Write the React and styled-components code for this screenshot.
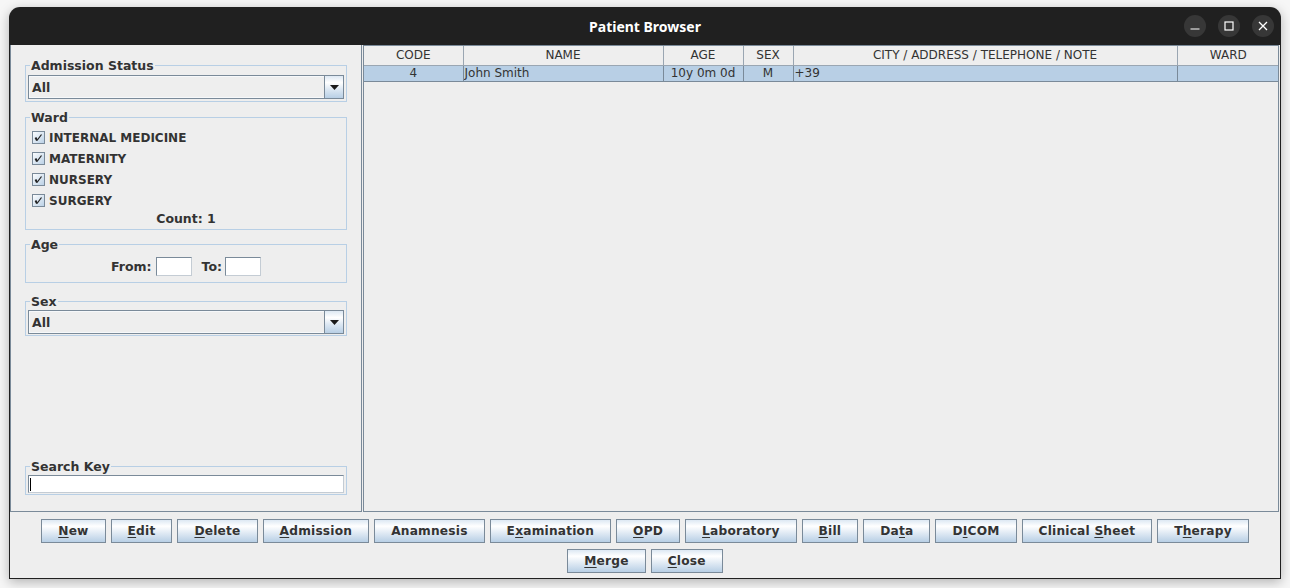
import React from 'react';
import styled, { createGlobalStyle } from 'styled-components';

const GlobalStyle = createGlobalStyle`
  html, body {
    margin: 0;
    padding: 0;
    background: #f6f6f6;
  }
  body {
    width: 1290px;
    height: 588px;
    overflow: hidden;
    font-family: "DejaVu Sans", "Liberation Sans", sans-serif;
    color: #333333;
  }
`;

const Screen = styled.div`
  padding: 7px 9px 0 9px;
`;

const Window = styled.div`
  width: 1272px;
  height: 572px;
  box-sizing: border-box;
  border-radius: 11px 11px 0 0;
  background: #202020;
  box-shadow: 0 3px 12px rgba(0, 0, 0, 0.28);
  display: flex;
  flex-direction: column;
  overflow: hidden;
`;

const TitleBar = styled.div`
  height: 38px;
  flex: none;
  display: grid;
  grid-template-columns: 1fr auto 1fr;
  align-items: center;
`;

const Title = styled.div`
  grid-column: 2;
  font-family: "Noto Sans", "DejaVu Sans", sans-serif;
  font-weight: 700;
  font-size: 14px;
  color: #ffffff;
  padding-top: 1px;
`;

const Controls = styled.div`
  grid-column: 3;
  justify-self: end;
  display: flex;
  gap: 12px;
  padding-right: 7px;
`;

const CircleButton = styled.div`
  width: 22px;
  height: 22px;
  border-radius: 50%;
  background: #373737;
  display: flex;
  align-items: center;
  justify-content: center;
`;

const Body = styled.div`
  flex: 1;
  margin: 0 1px 1px 1px;
  background: #eeeeee;
  display: flex;
  flex-direction: column;
  min-height: 0;
`;

const Split = styled.div`
  height: 467px;
  flex: none;
  display: flex;
  gap: 1px;
  padding-right: 1px;
`;

const LeftPanel = styled.div`
  width: 352px;
  box-sizing: border-box;
  border: 1px solid #7a8a99;
  border-top: none;
  padding: 13px 14px 16px 14px;
  display: flex;
  flex-direction: column;
`;

const Group = styled.fieldset`
  margin: ${({ $gap }) => $gap || 0}px 0 0 0;
  border: 1px solid #b8cfe5;
  padding: ${({ $pad }) => $pad || '2px 2px 2px 2px'};
  min-width: 0;
  ${({ $bottom }) => $bottom && 'margin-top: auto;'}
`;

const Legend = styled.legend`
  padding: 0 1px;
  margin-left: 2px;
  font-weight: 700;
  font-size: 12.5px;
  line-height: 15px;
  color: #333333;
`;

const Combo = styled.div`
  height: 24px;
  box-sizing: border-box;
  border: 1px solid #7a8a99;
  background: #eeeeee;
  display: flex;
  align-items: stretch;
`;

const ComboText = styled.div`
  flex: 1;
  padding-left: 2px;
  font-weight: 700;
  font-size: 12.5px;
  line-height: 22px;
  border: 1px solid #f6f8fa;
  border-right: none;
`;

const ComboArrow = styled.div`
  width: 18px;
  border-left: 1px solid #7a8a99;
  background: linear-gradient(to bottom, #dde8f3 0%, #ffffff 30%, #dde8f3 60%, #b8cfe5 100%);
  display: flex;
  align-items: center;
  justify-content: center;
  padding-top: 1px;
`;

const CheckRow = styled.div`
  height: 21px;
  display: flex;
  align-items: center;
  padding-left: 4px;
  gap: 4px;
  font-weight: 700;
  font-size: 12px;
`;

const CountLine = styled.div`
  height: 15px;
  line-height: 15px;
  text-align: center;
  font-weight: 700;
  font-size: 12.5px;
  margin-bottom: 1px;
`;

const AgeRow = styled.div`
  display: flex;
  justify-content: center;
  align-items: center;
  padding: 5px 0 6px 0;
  font-weight: 700;
  font-size: 12.5px;
`;

const AgeLabel = styled.span`
  margin: 0 ${({ $trail }) => $trail || 4}px 0 ${({ $lead }) => $lead || 0}px;
`;

const TextBox = styled.div`
  width: ${({ $w }) => ($w ? `${$w}px` : 'auto')};
  height: ${({ $h }) => $h || 19}px;
  box-sizing: border-box;
  background: #ffffff;
  border: 1px solid #7a8a99;
  border-right-color: #c4ccd4;
  border-bottom-color: #c4ccd4;
  position: relative;
`;

const Caret = styled.div`
  position: absolute;
  left: 1px;
  top: 2px;
  width: 1px;
  height: 13px;
  background: #000000;
`;

const TablePane = styled.div`
  flex: 1;
  box-sizing: border-box;
  border: 1px solid #7a8a99;
  background: #eeeeee;
  overflow: hidden;
`;

const Table = styled.table`
  width: 915px;
  table-layout: fixed;
  border-collapse: collapse;
  font-size: 12px;
  color: #333333;
`;

const HeadCell = styled.th`
  height: 19px;
  padding: 0;
  font-weight: 400;
  text-align: center;
  background: #eeeeee;
  border-right: 1px solid #9aa6b2;
  border-left: 1px solid #ffffff;
  border-bottom: 1px solid #9aa6b2;
  line-height: 19px;
  &:first-child { border-left: none; }
  &:last-child { border-right: none; }
`;

const Cell = styled.td`
  height: 15px;
  padding: 0 1px;
  line-height: 15px;
  background: #b8cfe5;
  text-align: ${({ $align }) => $align || 'left'};
  border-right: 1px solid #7a8a99;
  border-bottom: 1px solid #7a8a99;
  white-space: nowrap;
  overflow: hidden;
  &:last-child { border-right: none; }
`;

const ButtonBar = styled.div`
  flex: 1;
  display: flex;
  flex-direction: column;
  align-items: center;
  gap: 6px;
  padding-top: 7px;
`;

const ButtonRow = styled.div`
  display: flex;
  gap: 5px;
  justify-content: center;
`;

const Button = styled.button`
  height: 24px;
  padding: 0 16px;
  margin: 0;
  border: 1px solid #7a8a99;
  background: linear-gradient(to bottom, #dde8f3 0%, #ffffff 28%, #dde8f3 62%, #b8cfe5 100%);
  font-family: "DejaVu Sans", sans-serif;
  font-weight: 700;
  font-size: 12.2px;
  color: #333333;
  letter-spacing: 0.2px;
  cursor: pointer;
  & u {
    text-underline-offset: 2px;
  }
`;

const CheckIcon = () => (
  <svg width="13" height="13" viewBox="0 0 13 13">
    <defs>
      <linearGradient id="cbg" x1="0" y1="0" x2="1" y2="1">
        <stop offset="0" stopColor="#ffffff" />
        <stop offset="1" stopColor="#b8cfe5" />
      </linearGradient>
    </defs>
    <rect x="0.5" y="0.5" width="12" height="12" fill="url(#cbg)" stroke="#7a8a99" />
    <path d="M3.5 6.5 L5 9.5" stroke="#222222" strokeWidth="2" fill="none" />
    <path d="M5 9.5 L9.5 3.5" stroke="#222222" strokeWidth="1.2" fill="none" />
  </svg>
);

const DownArrow = () => (
  <svg width="9" height="5" viewBox="0 0 9 5">
    <path d="M0 0 H9 L4.5 5 Z" fill="#1a1a1a" />
  </svg>
);

const ComboBox = ({ value }) => (
  <Combo>
    <ComboText>{value}</ComboText>
    <ComboArrow><DownArrow /></ComboArrow>
  </Combo>
);

const label = (text, idx) =>
  idx == null ? text : (
    <>
      {text.slice(0, idx)}
      <u>{text[idx]}</u>
      {text.slice(idx + 1)}
    </>
  );

const row1 = [
  ['New', 0], ['Edit', 0], ['Delete', 0], ['Admission', 0], ['Anamnesis', null],
  ['Examination', 1], ['OPD', 0], ['Laboratory', 0], ['Bill', 0], ['Data', 2],
  ['DICOM', 1], ['Clinical Sheet', 9], ['Therapy', 1],
];
const row2 = [['Merge', 0], ['Close', 0]];

const wards = ['INTERNAL MEDICINE', 'MATERNITY', 'NURSERY', 'SURGERY'];

const columns = [
  ['CODE', 99], ['NAME', 200], ['AGE', 80], ['SEX', 50],
  ['CITY / ADDRESS / TELEPHONE / NOTE', 384], ['WARD', 102],
];

export default function App() {
  return (
    <Screen>
      <GlobalStyle />
      <Window>
        <TitleBar>
          <Title>Patient Browser</Title>
          <Controls>
            <CircleButton>
              <svg width="10" height="10" viewBox="0 0 10 10">
                <path d="M0.5 8 H9.5" stroke="#fff" strokeWidth="1.2" />
              </svg>
            </CircleButton>
            <CircleButton>
              <svg width="10" height="10" viewBox="0 0 10 10">
                <rect x="1" y="1" width="8" height="8" fill="none" stroke="#fff" strokeWidth="1.2" />
              </svg>
            </CircleButton>
            <CircleButton>
              <svg width="10" height="10" viewBox="0 0 10 10">
                <path d="M1 1 L9 9 M9 1 L1 9" stroke="#fff" strokeWidth="1.3" />
              </svg>
            </CircleButton>
          </Controls>
        </TitleBar>
        <Body>
          <Split>
            <LeftPanel>
              <Group>
                <Legend>Admission Status</Legend>
                <ComboBox value="All" />
              </Group>
              <Group $gap={8} $pad="2px 2px 2px 2px">
                <Legend>Ward</Legend>
                {wards.map((w) => (
                  <CheckRow key={w}>
                    <CheckIcon />
                    <span>{w}</span>
                  </CheckRow>
                ))}
                <CountLine>Count: 1</CountLine>
              </Group>
              <Group $gap={7} $pad="0 2px">
                <Legend>Age</Legend>
                <AgeRow>
                  <AgeLabel>From:</AgeLabel>
                  <TextBox $w={36} />
                  <AgeLabel $lead={10} $trail={3}>To:</AgeLabel>
                  <TextBox $w={36} />
                </AgeRow>
              </Group>
              <Group $gap={11} $pad="1px 2px">
                <Legend>Sex</Legend>
                <ComboBox value="All" />
              </Group>
              <Group $bottom $pad="1px 2px">
                <Legend>Search Key</Legend>
                <TextBox $h={18}>
                  <Caret />
                </TextBox>
              </Group>
            </LeftPanel>
            <TablePane>
              <Table>
                <colgroup>
                  {columns.map(([name, w]) => (
                    <col key={name} style={{ width: w }} />
                  ))}
                </colgroup>
                <thead>
                  <tr>
                    {columns.map(([name]) => (
                      <HeadCell key={name}>{name}</HeadCell>
                    ))}
                  </tr>
                </thead>
                <tbody>
                  <tr>
                    <Cell $align="center">4</Cell>
                    <Cell>John Smith</Cell>
                    <Cell $align="center">10y 0m 0d</Cell>
                    <Cell $align="center">M</Cell>
                    <Cell>+39</Cell>
                    <Cell></Cell>
                  </tr>
                </tbody>
              </Table>
            </TablePane>
          </Split>
          <ButtonBar>
            <ButtonRow>
              {row1.map(([t, i]) => (
                <Button key={t}>{label(t, i)}</Button>
              ))}
            </ButtonRow>
            <ButtonRow>
              {row2.map(([t, i]) => (
                <Button key={t}>{label(t, i)}</Button>
              ))}
            </ButtonRow>
          </ButtonBar>
        </Body>
      </Window>
    </Screen>
  );
}
